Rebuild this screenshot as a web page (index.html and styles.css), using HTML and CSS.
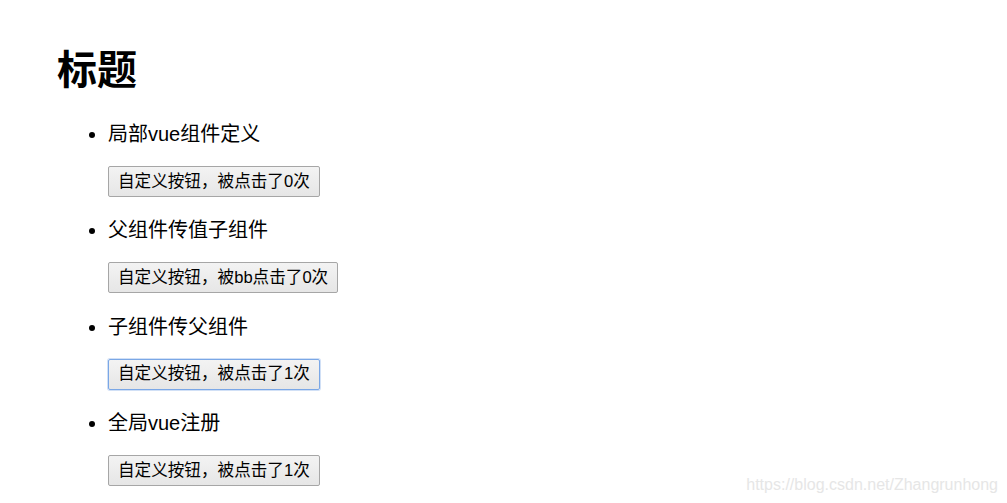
FILE: index.html
```html
<!DOCTYPE html>
<html lang="zh-CN">
<head>
    <meta charset="UTF-8">
    <meta name="viewport" content="width=device-width, initial-scale=1.0">
    <title>标题</title>
    <link rel="stylesheet" href="styles.css">
</head>
<body>
    <div id="app" class="app">
        <h1 class="page-title">标题</h1>
        <ul class="demo-list">
            <li class="demo-item">
                <div class="demo-label">局部vue组件定义</div>
                <button class="counter-btn">自定义按钮，被点击了0次</button>
            </li>
            <li class="demo-item">
                <div class="demo-label">父组件传值子组件</div>
                <button class="counter-btn">自定义按钮，被bb点击了0次</button>
            </li>
            <li class="demo-item">
                <div class="demo-label">子组件传父组件</div>
                <button class="counter-btn focused">自定义按钮，被点击了1次</button>
            </li>
            <li class="demo-item">
                <div class="demo-label">全局vue注册</div>
                <button class="counter-btn">自定义按钮，被点击了1次</button>
            </li>
        </ul>
    </div>
    <div class="watermark">https://blog.csdn.net/Zhangrunhong</div>
</body>
</html>
```

FILE: styles.css
```css
:root {
    --text-color: #000000;
    --btn-border: #a6a6a6;
    --btn-focus: #7aa7e6;
    --watermark: #e6e6e6;
}

* {
    margin: 0;
    padding: 0;
    box-sizing: border-box;
}

body {
    font-family: "Liberation Sans", "Noto Sans CJK SC", sans-serif;
    color: var(--text-color);
    background: #ffffff;
    overflow: hidden;
}

.app {
    padding-left: 57px;
}

.page-title {
    font-size: 40px;
    font-weight: 700;
    line-height: 48px;
    margin-top: 46px;
    margin-bottom: 28px;
}

.demo-list {
    padding-left: 51px;
    list-style: disc;
}

.demo-item {
    font-size: 20px;
    line-height: 24px;
    margin-bottom: 21.4px;
}

.counter-btn {
    display: block;
    margin-top: 20px;
    height: 31px;
    padding: 0 9px;
    font-family: "Liberation Sans", "Noto Sans CJK SC", sans-serif;
    font-size: 16.6px;
    line-height: 20px;
    color: #000000;
    background: linear-gradient(#f3f3f3, #e6e6e6);
    border: 1px solid var(--btn-border);
    border-radius: 2px;
}

.counter-btn.focused {
    border-color: var(--btn-focus);
    box-shadow: 0 0 0 1px rgba(122, 167, 230, 0.35);
}

.watermark {
    position: absolute;
    right: 9px;
    bottom: 9px;
    font-family: "Liberation Sans", sans-serif;
    font-size: 16px;
    color: var(--watermark);
}
```
